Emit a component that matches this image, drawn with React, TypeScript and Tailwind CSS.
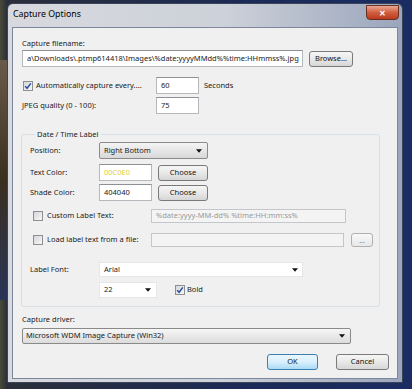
import React from "react";

const font = { fontFamily: '"Noto Sans", "Open Sans", sans-serif' };

function Check({ checked }: { checked?: boolean }) {
  return (
    <span className="relative inline-block w-[10px] h-[10px] shrink-0 border border-[#8f8f8f] bg-[linear-gradient(135deg,#d3d7dd,#f7f7f7)]">
      {checked && (
        <svg viewBox="0 0 8 8" className="absolute inset-0 w-[8px] h-[8px]">
          <path d="M1.2 4.2 L3.1 6.3 L6.8 1.4" fill="none" stroke="#2b4f9c" strokeWidth="1.5" />
        </svg>
      )}
    </span>
  );
}

function Arrow() {
  return (
    <svg viewBox="0 0 7 4" className="w-[6px] h-[4px]">
      <path d="M0 0 L7 0 L3.5 4 Z" fill="#111" />
    </svg>
  );
}

function Btn({ children, w, cls = "" }: { children: React.ReactNode; w: string; cls?: string }) {
  return (
    <div
      className={`${w} h-[16px] shrink-0 flex items-center justify-center rounded-[3px] border border-[#7a7a7a] bg-[linear-gradient(#f6f6f6,#e8e8e8_50%,#d6d6d6)] text-[7.5px] text-[#111] ${cls}`}
    >
      {children}
    </div>
  );
}

function Input({ w, h = "h-[17px]", children, cls = "" }: { w: string; h?: string; children?: React.ReactNode; cls?: string }) {
  return (
    <div className={`${w} ${h} shrink-0 flex items-center px-[4px] bg-white border border-[#b5b8bd] border-t-[#8e9096] text-[7.5px] text-[#222] whitespace-nowrap overflow-hidden ${cls}`}>
      {children}
    </div>
  );
}

export default function App() {
  return (
    <div
      className="relative w-[412px] h-[389px] overflow-hidden bg-[linear-gradient(90deg,#4a4a38_0px,#2b2f3a_7px,#1b2a56_60%,#1a2c62)]"
      style={font}
    >
      <div className="absolute left-0 top-[60px] w-[7px] h-[240px] bg-[linear-gradient(#6b5a4a,#3a3020_50%,#2a3458)]" />
      <div className="absolute left-[7px] top-[3px] w-[396px] h-[380px] rounded-t-[6px] border border-[#3a4458] bg-[linear-gradient(90deg,#d7d9de,#cdd1d9_55%,#9aa6bc)] flex flex-col">
        <div className="h-[23px] flex items-center justify-between pl-[5px] pr-[3px]">
          <span className="text-[8.8px] text-black mt-[-1px]">Capture Options</span>
          <div className="w-[33px] h-[15px] mt-[-6px] rounded-b-[4px] border border-[#6a3024] bg-[linear-gradient(#eaa892,#d25e40_50%,#bb3a1e)] flex items-center justify-center">
            <span className="text-white text-[8px] font-bold leading-none">✕</span>
          </div>
        </div>
        <div className="mx-[4px] mb-[3px] flex-1 bg-[#f0f0f0] border border-[#7c879c] flex flex-col pl-[9px] pt-[9px] text-[7.5px] text-[#1a1a1a]">
          <div className="h-[13px] leading-[13px]">Capture filename:</div>
          <div className="flex items-center h-[17px]">
            <Input w="w-[281px]">a\Downloads\.ptmp614418\Images\%date:yyyyMMdd%%time:HHmmss%.jpg</Input>
            <Btn w="w-[44px]" cls="ml-[6px]">Browse...</Btn>
          </div>
          <div className="flex items-center h-[17px] mt-[10px]">
            <div className="w-[134px] flex items-center gap-[3px] pl-[1px]">
              <Check checked />
              <span>Automatically capture every....</span>
            </div>
            <Input w="w-[43px]">60</Input>
            <span className="ml-[5px]">Seconds</span>
          </div>
          <div className="flex items-center h-[17px] mt-[3px]">
            <div className="w-[134px]">JPEG quality (0 - 100):</div>
            <Input w="w-[43px]">75</Input>
          </div>
          <fieldset className="mt-[14px] ml-[-1px] w-[359px] border border-[#d5dfe5] rounded-[3px] pl-[8px] pb-[8px] flex flex-col">
            <legend className="ml-[5px] px-[2px] h-[13px] leading-[13px]">Date / Time Label</legend>
            <div className="flex items-center h-[17px] mt-[1px]">
              <div className="w-[69px]">Position:</div>
              <div className="w-[109px] h-[17px] flex items-center justify-between pl-[4px] pr-[5px] rounded-[2px] border border-[#8a8a8a] bg-[linear-gradient(#f4f4f4,#e6e6e6_50%,#d8d8d8)]">
                <span>Right Bottom</span>
                <Arrow />
              </div>
            </div>
            <div className="flex items-center h-[17px] mt-[5px]">
              <div className="w-[69px]">Text Color:</div>
              <Input w="w-[53px]" cls="!text-[#e2cf3c]">00C0E0</Input>
              <Btn w="w-[50px]" cls="ml-[6px]">Choose</Btn>
            </div>
            <div className="flex items-center h-[17px] mt-[3px]">
              <div className="w-[69px]">Shade Color:</div>
              <Input w="w-[53px]">404040</Input>
              <Btn w="w-[50px]" cls="ml-[6px]">Choose</Btn>
            </div>
            <div className="flex items-center h-[14px] mt-[8px]">
              <div className="w-[121px] flex items-center gap-[4px] pl-[3px]">
                <Check />
                <span>Custom Label Text:</span>
              </div>
              <div className="w-[195px] h-[14px] flex items-center px-[4px] border border-[#c3c7cc] bg-[#f4f4f4] text-[#9a9a9a] whitespace-nowrap overflow-hidden">
                %date:yyyy-MM-dd% %time:HH:mm:ss%
              </div>
            </div>
            <div className="flex items-center h-[14px] mt-[10px]">
              <div className="w-[121px] flex items-center gap-[4px] pl-[3px]">
                <Check />
                <span className="whitespace-nowrap">Load label text from a file:</span>
              </div>
              <div className="w-[193px] h-[14px] border border-[#c3c7cc] bg-[#f4f4f4]" />
              <div className="ml-[7px] w-[22px] h-[14px] flex items-center justify-center rounded-[3px] border border-[#b0b0b0] bg-[linear-gradient(#f8f8f8,#e8e8e8)] text-[7px] leading-none text-[#777]">...</div>
            </div>
            <div className="flex items-center h-[15px] mt-[15px]">
              <div className="w-[69px]">Label Font:</div>
              <div className="w-[204px] h-[15px] flex items-center justify-between pl-[4px] pr-[4px] bg-white border border-[#e6e6e6]">
                <span>Arial</span>
                <Arrow />
              </div>
            </div>
            <div className="flex items-center h-[16px] mt-[5px]">
              <div className="w-[69px]" />
              <div className="w-[58px] h-[16px] flex items-center justify-between pl-[4px] pr-[5px] bg-white border border-[#e6e6e6]">
                <span>22</span>
                <Arrow />
              </div>
              <div className="ml-[18px] flex items-center gap-[2px]">
                <Check checked />
                <span>Bold</span>
              </div>
            </div>
          </fieldset>
          <div className="h-[13px] leading-[13px] mt-[6px]">Capture driver:</div>
          <div className="mt-[2px] w-[329px] h-[16px] flex items-center justify-between pl-[3px] pr-[5px] rounded-[2px] border border-[#8a8a8a] bg-[linear-gradient(#f6f6f6,#e9e9e9_50%,#dcdcdc)]">
            <span>Microsoft WDM Image Capture (Win32)</span>
            <Arrow />
          </div>
          <div className="mt-[10px] flex justify-end pr-[8px] gap-[18px]">
            <Btn w="w-[51px]" cls="!border-[#3c7fb1] !bg-[linear-gradient(#eaf6fd,#d9f0fc_50%,#a9daf5)]">OK</Btn>
            <Btn w="w-[53px]">Cancel</Btn>
          </div>
        </div>
      </div>
    </div>
  );
}
